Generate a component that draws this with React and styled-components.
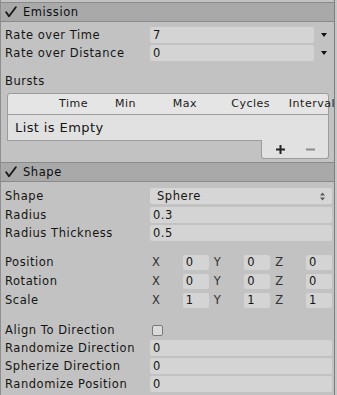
import React from "react";
import styled, { createGlobalStyle } from "styled-components";

const Global = createGlobalStyle`
  html, body { margin: 0; padding: 0; background: #c6c6c6; }
  body { font-family: "DejaVu Sans", Verdana, sans-serif; font-size: 11.5px; letter-spacing: 0.55px; color: #151515; }
`;

const Panel = styled.div`
  width: 333px;
  height: 393px;
  padding-top: 2px;
  background: #c2c2c2;
  border-left: 1px solid #8e8e8e;
  border-right: 1px solid #7e7e7e;
  border-bottom: 1px solid #7e7e7e;
`;

const SectionHeader = styled.div`
  display: flex;
  align-items: center;
  height: 18px;
  background: #a9a9a9;
  border-top: 1px solid #8a8a8a;
  border-bottom: 1px solid #8a8a8a;
  padding-left: 4px;
  gap: 6px;
  color: #0d0d0d;
`;

const SectionBody = styled.div`
  padding: ${(p) => p.$top}px 2px ${(p) => p.$bottom}px 0;
`;

const Row = styled.div`
  display: grid;
  grid-template-columns: ${(p) => (p.$curve ? "149px 1fr 18px" : "149px 1fr")};
  align-items: center;
  height: 16px;
  margin-top: ${(p) => p.$mt || 0}px;
  margin-bottom: ${(p) => (p.$mb == null ? 2 : p.$mb)}px;
`;

const Label = styled.div`
  padding-left: 4px;
  white-space: nowrap;
  line-height: 16px;
`;

const Field = styled.div`
  height: 16px;
  line-height: 16px;
  background: #d4d4d4;
  border-radius: 2px;
  padding-left: 3px;
  white-space: nowrap;
`;

const Popup = styled(Field)`
  display: flex;
  align-items: center;
  justify-content: space-between;
  padding-left: 7px;
  padding-right: 7px;
  background: #d6d6d6;
`;

const ArrowCell = styled.div`
  display: flex;
  justify-content: center;
  align-items: center;
  height: 16px;
  padding-left: 1px;
  &::after {
    content: "";
    border-left: 3px solid transparent;
    border-right: 3px solid transparent;
    border-top: 4px solid #111;
  }
`;

const Table = styled.div`
  margin: 4px 0 0 6px;
  width: 322px;
`;

const TableHead = styled.div`
  display: grid;
  grid-template-columns: 80px 48px 61px 73px 65px;
  height: 20px;
  line-height: 20px;
  background: #e5e5e5;
  border: 1px solid #9c9c9c;
  border-radius: 3px 3px 0 0;
  color: #1a1a1a;
  white-space: nowrap;
  letter-spacing: 0.5px;
  font-size: 11px;
`;

const HeadCell = styled.div`
  text-align: right;
`;

const TableBody = styled.div`
  height: 25px;
  line-height: 25px;
  background: #e1e1e1;
  border: 1px solid #9c9c9c;
  border-top: none;
  padding-left: 7px;
  font-size: 13px;
  letter-spacing: 0.4px;
`;

const TableFooter = styled.div`
  margin: -1px 0 0 auto;
  width: 68px;
  height: 19px;
  box-sizing: border-box;
  background: #e1e1e1;
  border: 1px solid #9c9c9c;
  border-top: none;
  border-radius: 0 0 3px 3px;
  display: flex;
  align-items: center;
  padding-left: 14px;
  gap: 21px;
`;

const VectorGrid = styled.div`
  display: grid;
  grid-template-columns: repeat(3, 1fr);
  gap: 3px;
`;

const VectorPart = styled.div`
  display: grid;
  grid-template-columns: 1fr 26px;
  align-items: center;
`;

const Axis = styled.span`
  padding-left: 2px;
  color: #333;
  line-height: 16px;
`;

const SmallField = styled(Field)`
  height: 15px;
  line-height: 15px;
`;

const Checkbox = styled.div`
  width: 9px;
  height: 9px;
  margin-left: 2px;
  border: 1px solid #7a7a7a;
  border-radius: 2px;
  background: #dadada;
`;

const Check = () => (
  <svg width="12" height="12" viewBox="0 0 12 12">
    <path d="M1.2 6.2 L4 10.2 L10.8 1.2" fill="none" stroke="#1a1a1a" strokeWidth="1.9" strokeLinecap="round" strokeLinejoin="round" />
  </svg>
);

const Plus = () => (
  <svg width="9" height="9" viewBox="0 0 9 9">
    <rect x="0" y="3.5" width="9" height="2" fill="#222" />
    <rect x="3.5" y="0" width="2" height="9" fill="#222" />
  </svg>
);

const Minus = () => (
  <svg width="9" height="9" viewBox="0 0 9 9">
    <rect x="0" y="3.5" width="9" height="2" fill="#8c8c8c" />
  </svg>
);

const UpDown = () => (
  <svg width="5" height="9" viewBox="0 0 5 9">
    <path d="M0 3.5 L2.5 0.5 L5 3.5 Z" fill="#5a5a5a" />
    <path d="M0 5.5 L2.5 8.5 L5 5.5 Z" fill="#5a5a5a" />
  </svg>
);

const ValueRow = ({ label, value, ...rest }) => (
  <Row {...rest}>
    <Label>{label}</Label>
    <Field>{value}</Field>
  </Row>
);

const VectorRow = ({ label, v, ...rest }) => (
  <Row $mb={3} {...rest}>
    <Label>{label}</Label>
    <VectorGrid>
      {["X", "Y", "Z"].map((a, i) => (
        <VectorPart key={a}>
          <Axis>{a}</Axis>
          <SmallField>{v[i]}</SmallField>
        </VectorPart>
      ))}
    </VectorGrid>
  </Row>
);

export default function App() {
  return (
    <>
      <Global />
      <Panel>
        <SectionHeader>
          <Check />
          <span>Emission</span>
        </SectionHeader>
        <SectionBody $top={5} $bottom={3}>
          <Row $curve>
            <Label>Rate over Time</Label>
            <Field>7</Field>
            <ArrowCell />
          </Row>
          <Row $curve>
            <Label>Rate over Distance</Label>
            <Field>0</Field>
            <ArrowCell />
          </Row>
          <Row $mt={12}>
            <Label>Bursts</Label>
          </Row>
          <Table>
            <TableHead>
              <HeadCell>Time</HeadCell>
              <HeadCell>Min</HeadCell>
              <HeadCell>Max</HeadCell>
              <HeadCell>Cycles</HeadCell>
              <HeadCell>Interval</HeadCell>
            </TableHead>
            <TableBody>List is Empty</TableBody>
            <TableFooter>
              <Plus />
              <Minus />
            </TableFooter>
          </Table>
        </SectionBody>
        <SectionHeader>
          <Check />
          <span>Shape</span>
        </SectionHeader>
        <SectionBody $top={6} $bottom={2}>
          <Row $mb={3}>
            <Label>Shape</Label>
            <Popup>
              <span>Sphere</span>
              <UpDown />
            </Popup>
          </Row>
          <ValueRow label="Radius" value="0.3" />
          <ValueRow label="Radius Thickness" value="0.5" />
          <VectorRow label="Position" v={["0", "0", "0"]} $mt={13} />
          <VectorRow label="Rotation" v={["0", "0", "0"]} />
          <VectorRow label="Scale" v={["1", "1", "1"]} />
          <Row $mt={14}>
            <Label>Align To Direction</Label>
            <Checkbox />
          </Row>
          <ValueRow label="Randomize Direction" value="0" />
          <ValueRow label="Spherize Direction" value="0" />
          <ValueRow label="Randomize Position" value="0" />
        </SectionBody>
      </Panel>
    </>
  );
}
